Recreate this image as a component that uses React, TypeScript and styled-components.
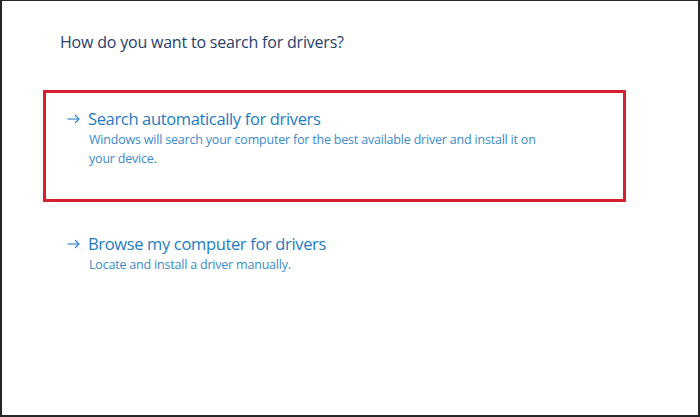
import React from "react";
import styled, { createGlobalStyle } from "styled-components";

const Global = createGlobalStyle`
  html, body { margin: 0; padding: 0; background: #ffffff; }
  body { font-family: "Open Sans", "Noto Sans", "Liberation Sans", sans-serif; }
`;

const Frame = styled.div`
  box-sizing: border-box;
  width: 700px;
  height: 417px;
  background: #ffffff;
  border: 2px solid #262626;
  border-top-width: 1px;
  display: flex;
  flex-direction: column;
  padding: 30px 0 0 41px;
`;

const Title = styled.h1`
  margin: 0 0 37px 17px;
  font-size: 16px;
  line-height: 22px;
  font-weight: 400;
  color: #27406b;
  letter-spacing: -0.2px;
`;

const Options = styled.div`
  display: flex;
  flex-direction: column;
  gap: 13px;
`;

const Option = styled.div<{ $selected?: boolean }>`
  box-sizing: border-box;
  width: 583px;
  height: 112px;
  border: 3px solid ${(p) => (p.$selected ? "#d6202f" : "transparent")};
  padding: 16px 0 0 21px;
  display: flex;
  flex-direction: column;
`;

const Heading = styled.div`
  display: flex;
  align-items: center;
  gap: 8px;
  font-size: 16.5px;
  line-height: 20px;
  color: #1f7bc3;
  letter-spacing: -0.35px;
`;

const Arrow = styled.svg`
  width: 13px;
  height: 10px;
  flex: none;
`;

const Description = styled.p`
  margin: 1px 0 0 22px;
  max-width: 460px;
  font-size: 12.5px;
  line-height: 19px;
  color: #3b8bca;
  letter-spacing: -0.2px;
`;

const ArrowIcon = () => (
  <Arrow viewBox="0 0 13 10" fill="none" stroke="#2a7fc2" strokeWidth="1.1">
    <path d="M0.5 5 H12" />
    <path d="M8 1 L12 5 L8 9" />
  </Arrow>
);

const options = [
  {
    title: "Search automatically for drivers",
    desc: "Windows will search your computer for the best available driver and install it on your device.",
    selected: true,
  },
  {
    title: "Browse my computer for drivers",
    desc: "Locate and install a driver manually.",
    selected: false,
  },
];

export default function App() {
  return (
    <>
      <Global />
      <Frame>
        <Title>How do you want to search for drivers?</Title>
        <Options>
          {options.map((o) => (
            <Option key={o.title} $selected={o.selected}>
              <Heading>
                <ArrowIcon />
                {o.title}
              </Heading>
              <Description>{o.desc}</Description>
            </Option>
          ))}
        </Options>
      </Frame>
    </>
  );
}
